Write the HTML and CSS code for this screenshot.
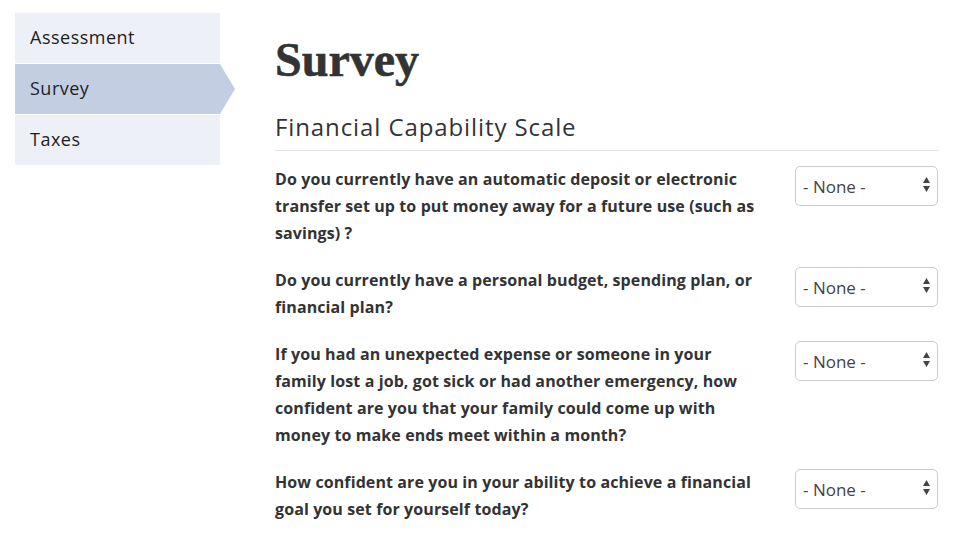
FILE: index.html
```html
<!DOCTYPE html>
<html>
<head>
<meta charset="utf-8">
<link rel="stylesheet" href="styles.css">
</head>
<body>
<div class="page">
  <nav class="sidebar">
    <a class="nav-item">Assessment</a>
    <a class="nav-item active">Survey</a>
    <a class="nav-item">Taxes</a>
  </nav>
  <main class="main">
    <h1 class="title">Survey</h1>
    <h2 class="subtitle">Financial Capability Scale</h2>
    <div class="rows">
      <div class="row">
        <div class="question">Do you currently have an automatic deposit or electronic transfer set up to put money away for a future use (such as savings) ?</div>
        <div class="select"><span class="select-text">- None -</span><svg class="arrows" width="7" height="15" viewBox="0 0 7 15"><path d="M3.5 0 L7 6 L0 6 Z M0 9 L7 9 L3.5 15 Z" fill="#444"/></svg></div>
      </div>
      <div class="row">
        <div class="question">Do you currently have a personal budget, spending plan, or financial plan?</div>
        <div class="select"><span class="select-text">- None -</span><svg class="arrows" width="7" height="15" viewBox="0 0 7 15"><path d="M3.5 0 L7 6 L0 6 Z M0 9 L7 9 L3.5 15 Z" fill="#444"/></svg></div>
      </div>
      <div class="row">
        <div class="question">If you had an unexpected expense or someone in your family lost a job, got sick or had another emergency, how confident are you that your family could come up with money to make ends meet within a month?</div>
        <div class="select"><span class="select-text">- None -</span><svg class="arrows" width="7" height="15" viewBox="0 0 7 15"><path d="M3.5 0 L7 6 L0 6 Z M0 9 L7 9 L3.5 15 Z" fill="#444"/></svg></div>
      </div>
      <div class="row">
        <div class="question">How confident are you in your ability to achieve a financial goal you set for yourself today?</div>
        <div class="select"><span class="select-text">- None -</span><svg class="arrows" width="7" height="15" viewBox="0 0 7 15"><path d="M3.5 0 L7 6 L0 6 Z M0 9 L7 9 L3.5 15 Z" fill="#444"/></svg></div>
      </div>
    </div>
  </main>
</div>
</body>
</html>
```
FILE: styles.css
```css
html, body {
  margin: 0;
  padding: 0;
  background: #fff;
}
body {
  font-family: "Open Sans", "Noto Sans", sans-serif;
  color: #333;
  overflow: hidden;
}
.page {
  display: flex;
  align-items: flex-start;
  padding: 13px 19px 0 15px;
}
.sidebar {
  width: 205px;
  flex: none;
  display: flex;
  flex-direction: column;
  gap: 1px;
}
.nav-item {
  position: relative;
  display: block;
  height: 50px;
  line-height: 48px;
  padding-left: 15px;
  background: #edf0f7;
  color: #1e1e1e;
  font-size: 18px;
  letter-spacing: 0.5px;
  text-decoration: none;
}
.nav-item.active {
  background: #c4cee3;
}
.nav-item.active::after {
  content: "";
  position: absolute;
  top: 0;
  right: -15px;
  border-top: 25px solid transparent;
  border-bottom: 25px solid transparent;
  border-left: 15px solid #c4cee3;
}
.main {
  flex: 1;
  margin-left: 55px;
}
.title {
  margin: 19px 0 0;
  font-family: "Liberation Serif", serif;
  font-weight: bold;
  font-size: 48px;
  line-height: 56px;
  color: #333;
  -webkit-text-stroke: 0.6px #333;
}
.subtitle {
  margin: 24px 0 0;
  padding-bottom: 8px;
  border-bottom: 1px solid #e5e5e5;
  font-weight: normal;
  font-size: 24px;
  letter-spacing: 0.9px;
  line-height: 30px;
  color: #333;
}
.rows {
  padding-top: 15px;
  display: flex;
  flex-direction: column;
  gap: 20px;
}
.row {
  display: flex;
  justify-content: space-between;
  align-items: flex-start;
}
.question {
  width: 488px;
  font-weight: bold;
  font-size: 16px;
  letter-spacing: 0.1px;
  line-height: 27px;
  color: #333;
}
.select {
  position: relative;
  margin-top: 0;
  height: 38px;
  border: 1px solid #ccc;
  border-radius: 5px;
  display: flex;
  align-items: center;
  padding-left: 7px;
  box-sizing: content-box;
  width: 134px;
}
.select-text {
  font-size: 17px;
  color: #444;
}
.arrows {
  position: absolute;
  right: 7px;
  top: 10px;
}
```
